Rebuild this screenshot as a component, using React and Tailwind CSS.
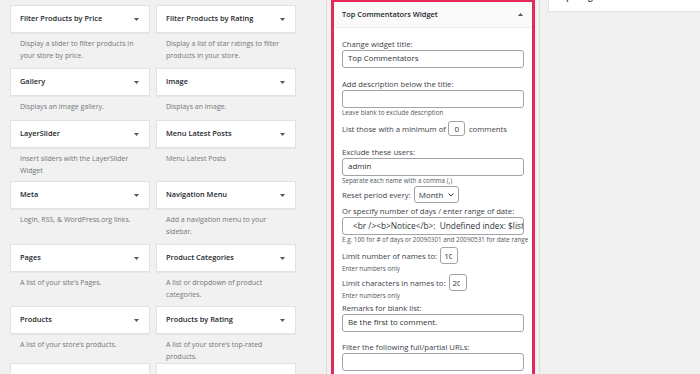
import React from "react";

const widgets = [
  ["Filter Products by Price", ["Display a slider to filter products in", "your store by price."]],
  ["Filter Products by Rating", ["Display a list of star ratings to filter", "products in your store."]],
  ["Gallery", ["Displays an image gallery."]],
  ["Image", ["Displays an image."]],
  ["LayerSlider", ["Insert sliders with the LayerSlider", "Widget"]],
  ["Menu Latest Posts", ["Menu Latest Posts"]],
  ["Meta", ["Login, RSS, & WordPress.org links."]],
  ["Navigation Menu", ["Add a navigation menu to your", "sidebar."]],
  ["Pages", ["A list of your site\u2019s Pages."]],
  ["Product Categories", ["A list or dropdown of product", "categories."]],
  ["Products", ["A list of your store\u2019s products."]],
  ["Products by Rating", ["A list of your store\u2019s top-rated", "products."]],
  ["", []],
  ["", []],
];

function Down() {
  return (
    <svg width="5" height="3" viewBox="0 0 5 3" className="shrink-0">
      <polygon points="0,0 5,0 2.5,3" fill="#50575e" />
    </svg>
  );
}

function Up() {
  return (
    <svg width="5" height="3" viewBox="0 0 5 3" className="shrink-0">
      <polygon points="0,3 5,3 2.5,0" fill="#50575e" />
    </svg>
  );
}

function Widget({ title, lines }) {
  return (
    <div className="flex flex-col">
      <div className="h-[28px] border border-[#e2e2e2] bg-white shadow-[0_1px_1px_rgba(0,0,0,0.04)] flex items-center justify-between pl-[9px] pr-[10px]">
        <span className="text-[7.4px] font-semibold text-[#23282d] leading-none whitespace-nowrap">{title}</span>
        <Down />
      </div>
      <div className="pt-[5px] pl-[10px] text-[7px] leading-[12px] text-[#72777c] whitespace-nowrap">
        {lines.map((l, i) => (
          <div key={i}>{l}</div>
        ))}
      </div>
    </div>
  );
}

function Label({ children, className = "" }) {
  return <div className={"text-[7.7px] leading-[12px] text-[#3c434a] whitespace-nowrap " + className}>{children}</div>;
}

function Note({ children }) {
  return <div className="text-[6.3px] leading-[10px] text-[#50575e] whitespace-nowrap">{children}</div>;
}

function Field({ children, className = "", pl = "pl-[5px]" }) {
  return (
    <div
      className={
        "h-[18px] w-full border border-[#a0a4a8] rounded-[3px] bg-white flex items-center overflow-hidden whitespace-pre text-[#2c3338] " +
        pl +
        " " +
        className
      }
    >
      {children}
    </div>
  );
}

function NumBox({ value, w, h, inner }) {
  return (
    <div
      className={
        "border border-[#a0a4a8] rounded-[3px] bg-white flex items-center pl-[3px] text-[8px] text-[#2c3338] " +
        w +
        " " +
        h
      }
    >
      <div className={"overflow-hidden whitespace-nowrap " + inner}>{value}</div>
    </div>
  );
}

export default function App() {
  return (
    <div className="w-[700px] h-[374px] overflow-hidden bg-[#f1f1f1] flex font-['Open_Sans',sans-serif]">
      {/* Available widgets */}
      <div className="w-[326px] shrink-0 pl-[10px] pt-[5px]">
        <div className="grid grid-cols-[140px_140px] gap-x-[6px] grid-rows-[63px_52px_61px_63px_62px_57px_40px]">
          {widgets.map(([t, l], i) => (
            <Widget key={i} title={t} lines={l} />
          ))}
        </div>
      </div>

      {/* Sidebar with open widget */}
      <div className="w-[214px] shrink-0 h-[374px] border-l border-r border-[#dddddd] px-[4px]">
        <div className="mt-[-1px] border-[3px] border-[#e5285c] bg-white">
          <div className="h-[26px] bg-[#fafafa] border-b border-[#ececec] flex items-center justify-between pl-[8px] pr-[9px]">
            <span className="text-[7.4px] font-semibold text-[#23282d] whitespace-nowrap">Top Commentators Widget</span>
            <Up />
          </div>
          <div className="px-[8px] pb-[4px] flex flex-col">
            <Label className="mt-[10px]">Change widget title:</Label>
            <Field className="text-[7.8px]">Top Commentators</Field>
            <Label className="mt-[10px]">Add description below the title:</Label>
            <Field />
            <Note>Leave blank to exclude description</Note>
            <div className="mt-[3px] flex items-center">
              <Label>List those with a minimum of</Label>
              <div className="ml-[2px]">
                <NumBox value="0" w="w-[17px]" h="h-[15px]" inner="w-[10px] text-center" />
              </div>
              <Label className="ml-[4px]">comments</Label>
            </div>
            <Label className="mt-[10px]">Exclude these users:</Label>
            <Field className="text-[7.9px]">admin</Field>
            <Note>Separate each name with a comma (,)</Note>
            <div className="flex items-center">
              <Label>Reset period every:</Label>
              <div className="ml-[3px] w-[45px] h-[17px] border border-[#a0a4a8] rounded-[3px] bg-white flex items-center justify-between pl-[4px] pr-[4px] text-[8px] text-[#2c3338]">
                <span>Month</span>
                <svg width="6" height="4" viewBox="0 0 6 4">
                  <polyline points="0.5,0.5 3,3 5.5,0.5" fill="none" stroke="#2c3338" strokeWidth="1" />
                </svg>
              </div>
            </div>
            <Label className="mt-[2px]">Or specify number of days / enter range of date:</Label>
            <Field pl="pl-[10px]" className="h-[17px] text-[8.3px]">
              {"<br /><b>Notice</b>:  Undefined index: $list_of_days in"}
            </Field>
            <Note>E.g. 100 for # of days or 20090301 and 20090531 for date range</Note>
            <div className="mt-[2px] flex items-center">
              <Label>Limit number of names to:</Label>
              <div className="ml-[3px]">
                <NumBox value="10" w="w-[18px]" h="h-[17px]" inner="w-[7.5px]" />
              </div>
            </div>
            <Note>Enter numbers only</Note>
            <div className="flex items-center">
              <Label>Limit characters in names to:</Label>
              <div className="ml-[3px]">
                <NumBox value="20" w="w-[18px]" h="h-[17px]" inner="w-[7px]" />
              </div>
            </div>
            <Note>Enter numbers only</Note>
            <Label className="mt-[1px]">Remarks for blank list:</Label>
            <Field className="text-[7.9px]">Be the first to comment.</Field>
            <Label className="mt-[9px]">Filter the following full/partial URLs:</Label>
            <Field />
          </div>
        </div>
      </div>

      {/* Next sidebar */}
      <div className="flex-1 pl-[8px]">
        <div className="h-[12px] bg-white border-l border-b border-[#e2e2e2] overflow-hidden pl-[11px]">
          <div className="mt-[-9px] text-[8px] leading-[12px] font-semibold text-[#23282d] whitespace-nowrap">Opening Hours</div>
        </div>
      </div>
    </div>
  );
}
